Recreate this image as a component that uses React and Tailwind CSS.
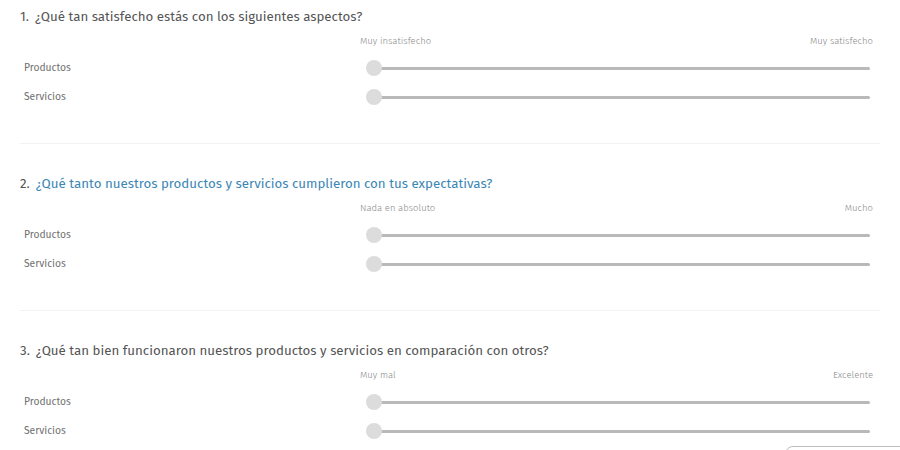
const questions = [
  { n: "1.", text: "¿Qué tan satisfecho estás con los siguientes aspectos?", min: "Muy insatisfecho", max: "Muy satisfecho", active: false },
  { n: "2.", text: "¿Qué tanto nuestros productos y servicios cumplieron con tus expectativas?", min: "Nada en absoluto", max: "Mucho", active: true },
  { n: "3.", text: "¿Qué tan bien funcionaron nuestros productos y servicios en comparación con otros?", min: "Muy mal", max: "Excelente", active: false },
];

const rows = ["Productos", "Servicios"];

const Slider = () => (
  <div className="relative h-[16px] w-[508px] flex items-center">
    <div className="ml-[10px] h-[3px] w-[495px] rounded-full bg-[#b9b9b9]" />
    <div className="absolute left-[1px] top-0 h-[16px] w-[16px] rounded-full bg-[#dcdcdc]" />
  </div>
);

const Question = ({ q, last }) => (
  <div className={last ? "pt-[8px]" : "pt-[8px] pb-[38px] border-b border-[#f2f2f2]"}>
    <h2 className="text-[13.3px] leading-[18px] text-[#555555]">
      <span>{q.n}</span>
      <span className={q.active ? "ml-[6px] text-[#3b86b3]" : "ml-[6px]"}>{q.text}</span>
    </h2>
    <div className="mt-[9px] ml-[340px] w-[513px] flex justify-between text-[9.5px] font-light leading-[12px] text-[#8a8a8a]">
      <span>{q.min}</span>
      <span>{q.max}</span>
    </div>
    <div className="mt-[13px] flex flex-col gap-[13px]">
      {rows.map((r) => (
        <div key={r} className="flex items-center">
          <span className="w-[345px] pl-[4px] text-[10.3px] text-[#707070]">{r}</span>
          <Slider />
        </div>
      ))}
    </div>
  </div>
);

export default function App() {
  return (
    <div className="relative h-[450px] w-[900px] overflow-hidden bg-white" style={{ fontFamily: '"Fira Sans", "Open Sans", "Noto Sans", sans-serif' }}>
      <div className="ml-[20px] w-[860px] flex flex-col gap-[23px]">
        {questions.map((q, i) => (
          <Question key={q.n} q={q} last={i === questions.length - 1} />
        ))}
      </div>
      <div className="absolute left-[785px] top-[446px] h-[20px] w-[140px] rounded-tl-[8px] border border-[#bdbdbd] bg-white" />
    </div>
  );
}
